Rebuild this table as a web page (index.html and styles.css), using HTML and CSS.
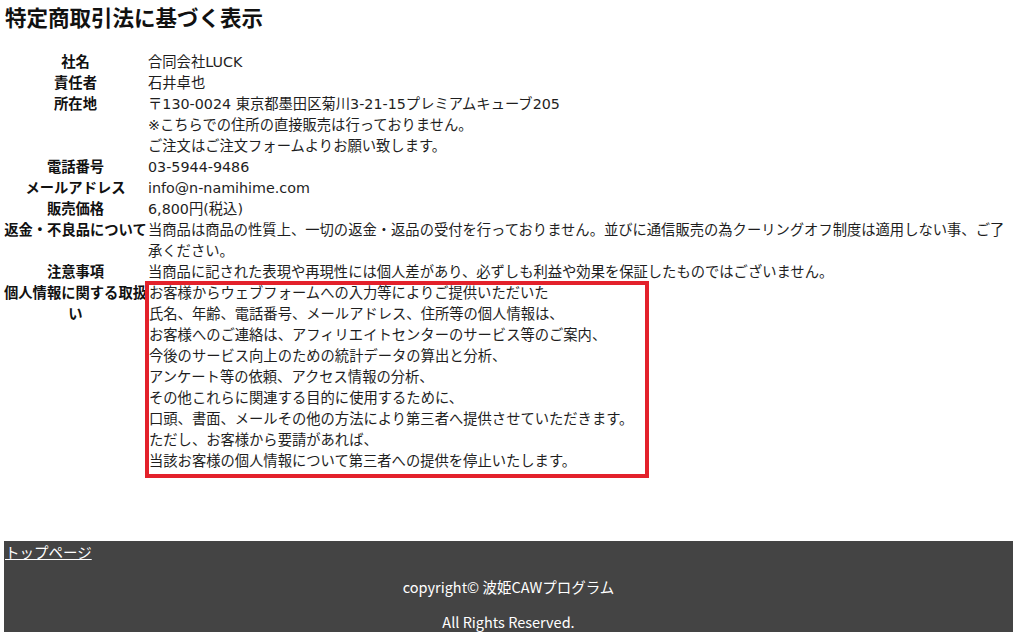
FILE: index.html
```html
<!DOCTYPE html>
<html lang="ja">
<head>
<meta charset="utf-8">
<title>特定商取引法に基づく表示</title>
<link rel="stylesheet" href="styles.css">
</head>
<body>
<div class="page">
  <h1 class="title">特定商取引法に基づく表示</h1>
  <table class="law">
    <tr><th>社名</th><td>合同会社LUCK</td></tr>
    <tr><th>責任者</th><td>石井卓也</td></tr>
    <tr><th>所在地</th><td>〒130-0024 東京都墨田区菊川3-21-15プレミアムキューブ205<br>※こちらでの住所の直接販売は行っておりません。<br>ご注文はご注文フォームよりお願い致します。</td></tr>
    <tr><th>電話番号</th><td>03-5944-9486</td></tr>
    <tr><th>メールアドレス</th><td>info@n-namihime.com</td></tr>
    <tr><th>販売価格</th><td>6,800円(税込)</td></tr>
    <tr><th>返金・不良品について</th><td>当商品は商品の性質上、一切の返金・返品の受付を行っておりません。並びに通信販売の為クーリングオフ制度は適用しない事、ご了承ください。</td></tr>
    <tr><th>注意事項</th><td>当商品に記された表現や再現性には個人差があり、必ずしも利益や効果を保証したものではございません。</td></tr>
    <tr><th>個人情報に関する取扱い</th><td><div class="mark">お客様からウェブフォームへの入力等によりご提供いただいた<br>氏名、年齢、電話番号、メールアドレス、住所等の個人情報は、<br>お客様へのご連絡は、アフィリエイトセンターのサービス等のご案内、<br>今後のサービス向上のための統計データの算出と分析、<br>アンケート等の依頼、アクセス情報の分析、<br>その他これらに関連する目的に使用するために、<br>口頭、書面、メールその他の方法により第三者へ提供させていただきます。<br>ただし、お客様から要請があれば、<br>当該お客様の個人情報について第三者への提供を停止いたします。</div></td></tr>
  </table>
  <footer class="foot">
    <a class="toplink" href="#">トップページ</a>
    <p class="copy">copyright© 波姫CAWプログラム</p>
    <p class="copy">All Rights Reserved.</p>
  </footer>
</div>
</body>
</html>
```

FILE: styles.css
```css
html, body {
  margin: 0;
  padding: 0;
  background: #fff;
}
body {
  font-family: "DejaVu Sans", "Noto Sans CJK JP", sans-serif;
  font-size: 14.3px;
  line-height: 21px;
  color: #1e1e1e;
}
.page {
  margin-left: 4px;
  width: 1009px;
}
.title {
  margin: 0;
  padding-left: 1px;
  font-family: "Noto Sans CJK JP", sans-serif;
  font-size: 21.5px;
  line-height: 34px;
  font-weight: bold;
  color: #111;
}
.law {
  margin-top: 18px;
  border-collapse: collapse;
  width: 1009px;
}
.law th, .law td {
  padding: 0;
  vertical-align: top;
}
.law th {
  width: 143px;
  text-align: center;
  font-weight: bold;
  color: #111;
}
.law td {
  text-align: left;
  padding-left: 1px;
}
.mark {
  position: relative;
  margin-left: 1px;
}
.mark::after {
  content: "";
  position: absolute;
  left: -4px;
  top: -2px;
  width: 504px;
  height: 197px;
  box-sizing: border-box;
  border: 4px solid #e3212b;
  pointer-events: none;
}
.foot {
  margin-top: 69px;
  background: #444;
  color: #fff;
  padding-bottom: 4px;
  font-family: "Noto Sans CJK JP", sans-serif;
  font-size: 14.5px;
}
.toplink {
  display: block;
  color: #fff;
  text-decoration: underline;
  padding-left: 1px;
}
.copy {
  margin: 14px 0 0;
  text-align: center;
  line-height: 21px;
}
```
